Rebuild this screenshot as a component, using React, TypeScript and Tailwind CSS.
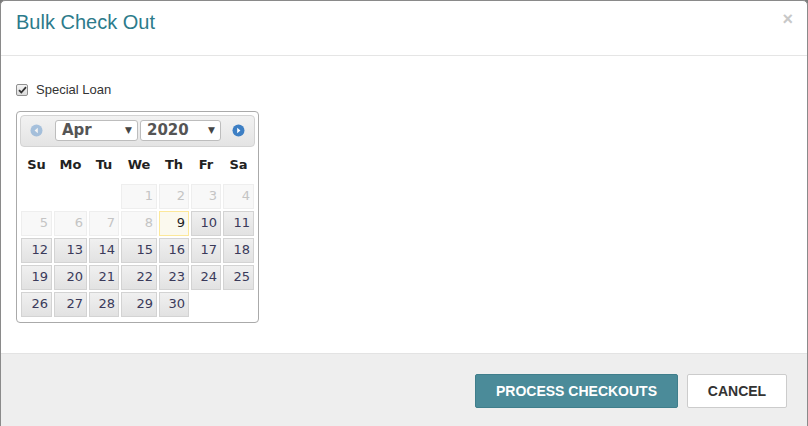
import React from 'react';

const cols = 'grid grid-cols-[31px_33px_30px_36px_30px_30px_31px] gap-x-[2px]';

type Day = { n: number | null; kind: 'empty' | 'off' | 'today' | 'on' };

const days: Day[] = [
  { n: null, kind: 'empty' },
  { n: null, kind: 'empty' },
  { n: null, kind: 'empty' },
  ...[1, 2, 3, 4, 5, 6, 7, 8].map((n) => ({ n, kind: 'off' as const })),
  { n: 9, kind: 'today' },
  ...Array.from({ length: 21 }, (_, i) => ({ n: i + 10, kind: 'on' as const })),
];

function DayCell({ d }: { d: Day }) {
  if (d.kind === 'empty') return <div className="h-[25px]" />;
  const cls =
    d.kind === 'off'
      ? 'border-[#eeeeee] bg-[#f8f8f8] text-[#c4c4c4]'
      : d.kind === 'today'
        ? 'border-[#fce89a] bg-[#fbf9ee] text-[#222]'
        : 'border-[#d3d3d3] bg-gradient-to-b from-[#f0f0f0] to-[#e2e2e2] text-[#3a3a5a]';
  return (
    <div className={`flex h-[25px] items-center justify-end border pr-[3px] text-[13px] ${cls}`}>
      {d.n}
    </div>
  );
}

function Select({ label, width }: { label: string; width: string }) {
  return (
    <div
      className={`${width} flex h-[21px] items-center justify-between rounded-[3px] border border-[#bdbdbd] bg-white pl-[6px] pr-[5px] text-[15px] font-bold text-[#555]`}
    >
      <span className="leading-none">{label}</span>
      <span className="text-[9px] text-[#444]">▼</span>
    </div>
  );
}

export default function App() {
  return (
    <div className="h-[426px] w-[808px] overflow-hidden bg-[#7a7a7a] font-['Liberation_Sans',Arial,sans-serif]">
      <div className="flex h-[440px] flex-col rounded-t-[5px] border border-[#8a8a8a] bg-white">
        {/* Header */}
        <div className="relative flex h-[55px] items-center border-b border-[#e5e5e5] pl-[15px]">
          <h1 className="-mt-[12px] text-[20px] text-[#2c7b8b]">Bulk Check Out</h1>
          <span className="absolute right-[14px] top-[5px] text-[18px] font-bold text-[#c8c8c8]">×</span>
        </div>

        {/* Body */}
        <div className="h-[297px] pl-[15px] pt-[24px]">
          <label className="flex items-center gap-[8px] text-[13px] text-[#333]">
            <span className="flex h-[12px] w-[12px] items-center justify-center rounded-[2px] border border-[#8f8f8f] bg-gradient-to-b from-[#f4f4f4] to-[#dcdcdc]">
              <svg width="9" height="8" viewBox="0 0 9 8">
                <path d="M1 4.2 3.3 6.5 8 1.2" fill="none" stroke="#333" strokeWidth="1.8" />
              </svg>
            </span>
            Special Loan
          </label>

          <div className="mt-[11px] h-[212px] w-[243px] rounded-[4px] border border-[#aaaaaa] p-[3px] font-['DejaVu_Sans',Verdana,sans-serif]">
            <div className="flex h-[32px] items-center rounded-[4px] border border-[#d3d3d3] bg-gradient-to-b from-[#f2f2f2] to-[#e4e4e4] px-[9px]">
              <svg width="13" height="13" viewBox="0 0 13 13" className="opacity-40">
                <circle cx="6.5" cy="6.5" r="6" fill="#3d7fc4" />
                <path d="M7.8 3.8 4.6 6.5 7.8 9.2Z" fill="#fff" />
              </svg>
              <div className="ml-[12px] flex gap-[2px]">
                <Select label="Apr" width="w-[83px]" />
                <Select label="2020" width="w-[81px]" />
              </div>
              <svg width="13" height="13" viewBox="0 0 13 13" className="ml-auto">
                <circle cx="6.5" cy="6.5" r="6" fill="#3d7fc4" />
                <path d="M5.2 3.8 8.4 6.5 5.2 9.2Z" fill="#fff" />
              </svg>
            </div>

            <div className="px-[1px]">
              <div className={`${cols} h-[37px] items-center text-center text-[13px] font-bold text-[#222]`}>
                {['Su', 'Mo', 'Tu', 'We', 'Th', 'Fr', 'Sa'].map((d) => (
                  <div key={d}>{d}</div>
                ))}
              </div>
              <div className={`${cols} gap-y-[2px]`}>
                {days.map((d, i) => (
                  <DayCell key={i} d={d} />
                ))}
              </div>
            </div>
          </div>
        </div>

        {/* Footer */}
        <div className="flex flex-1 justify-end gap-[9px] border-t border-[#e3e3e3] bg-[#eeeeee] pr-[20px] pt-[20px]">
          <button className="h-[34px] w-[203px] rounded-[2px] border border-[#3f7e8b] bg-[#4b8b99] text-[14px] font-bold text-white">
            PROCESS CHECKOUTS
          </button>
          <button className="h-[34px] w-[100px] rounded-[2px] border border-[#cccccc] bg-white text-[14px] font-bold text-[#333]">
            CANCEL
          </button>
        </div>
      </div>
    </div>
  );
}
